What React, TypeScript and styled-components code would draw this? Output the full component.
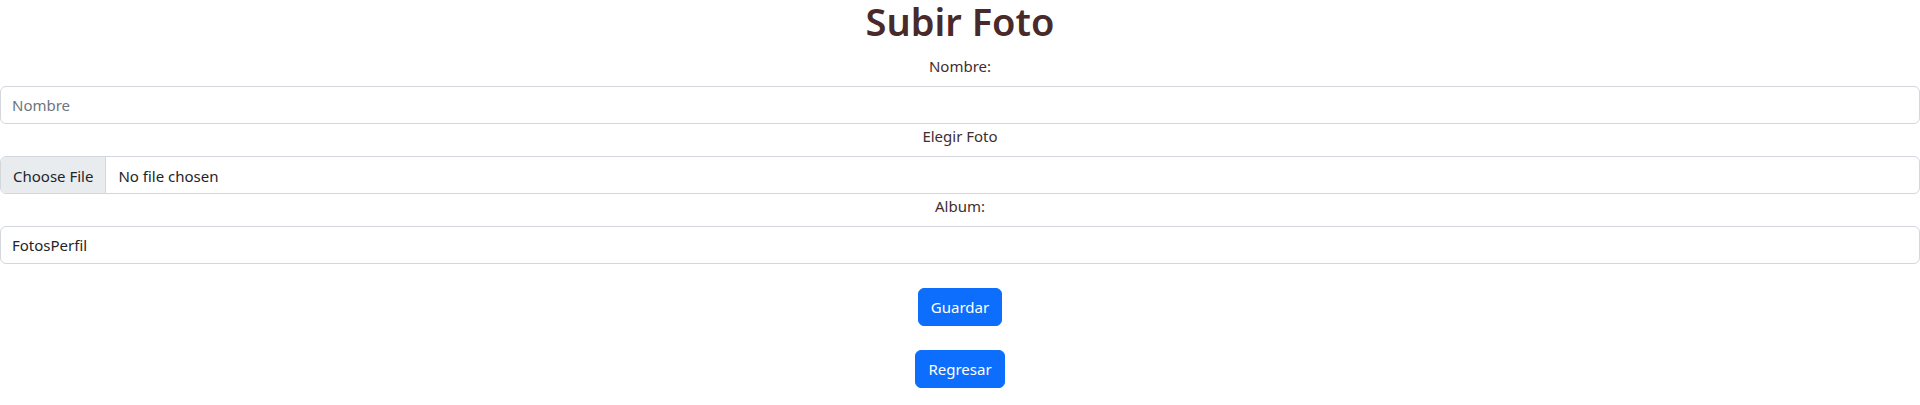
import React from "react";
import styled, { createGlobalStyle } from "styled-components";

const Global = createGlobalStyle`
  html, body { margin: 0; padding: 0; background: #fff; }
  body {
    font-family: "Noto Sans", "Open Sans", sans-serif;
    font-size: 15px;
    line-height: 24px;
    color: #212529;
  }
  *, *::before, *::after { box-sizing: border-box; }
`;

const Page = styled.div`
  width: 1920px;
  text-align: center;
`;

const Title = styled.h1`
  margin: 0 0 13px;
  padding-top: 1px;
  font-size: 38px;
  font-weight: 600;
  line-height: 40px;
  color: #482a2a;
`;

const Field = styled.div`
  display: flex;
  flex-direction: column;
`;

const Label = styled.label`
  display: block;
  margin-bottom: 8px;
  line-height: 24px;
  color: #3f2e2e;
`;

const Input = styled.input`
  display: block;
  width: 100%;
  height: 38px;
  padding: 6px 11px;
  font-family: inherit;
  font-size: 15px;
  line-height: 24px;
  color: #212529;
  background: #fff;
  border: 1px solid #d3d6da;
  border-radius: 6px;
  outline: none;
  &::placeholder { color: #6c757d; }
`;

const FileInput = styled(Input)`
  overflow: hidden;
  &::file-selector-button {
    font-family: inherit;
    font-size: 15px;
    line-height: 24px;
    height: 38px;
    padding: 6px 12px;
    margin: -6px 12px -6px -11px;
    color: #212529;
    background: #e9ecef;
    border: 0 solid #d3d6da;
    border-right-width: 1px;
    border-radius: 0;
  }
`;

const Actions = styled.div`
  display: flex;
  flex-direction: column;
  align-items: center;
  gap: 24px;
  margin-top: 24px;
`;

const Button = styled.button`
  font-family: inherit;
  font-size: 15px;
  line-height: 24px;
  padding: 6px 12px;
  color: #fff;
  background: #0d6efd;
  border: 1px solid #0d6efd;
  border-radius: 6px;
`;

export default function App() {
  return (
    <Page>
      <Global />
      <Title>Subir Foto</Title>
      <Field>
        <Label htmlFor="nombre">Nombre:</Label>
        <Input id="nombre" type="text" placeholder="Nombre" />
      </Field>
      <Field>
        <Label htmlFor="foto">Elegir Foto</Label>
        <FileInput id="foto" type="file" />
      </Field>
      <Field>
        <Label htmlFor="album">Album:</Label>
        <Input id="album" type="text" defaultValue="FotosPerfil" />
      </Field>
      <Actions>
        <Button type="button">Guardar</Button>
        <Button type="button">Regresar</Button>
      </Actions>
    </Page>
  );
}
